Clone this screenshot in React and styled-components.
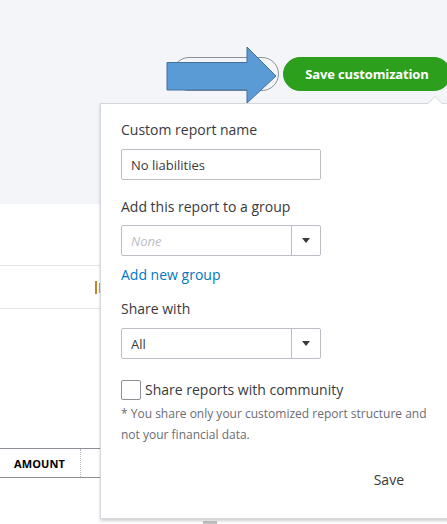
import React from "react";
import styled, { createGlobalStyle } from "styled-components";

const Global = createGlobalStyle`
  html, body { margin: 0; padding: 0; background: #fff; }
  body { font-family: "Open Sans", "Liberation Sans", sans-serif; color: #393a3d; }
  * { box-sizing: border-box; }
`;

const Page = styled.div`
  position: relative;
  width: 447px;
  height: 524px;
  overflow: hidden;
  background: #fff;
`;

const TopBand = styled.div`
  height: 204px;
  background: #f4f5f9;
  display: flex;
  justify-content: flex-end;
  align-items: flex-start;
  padding-top: 57px;
  margin-right: -4px;
`;

const ButtonRow = styled.div`
  display: flex;
  gap: 4px;
`;

const Pill = styled.button`
  height: 34px;
  border-radius: 17px;
  font-family: inherit;
  font-size: 13px;
  font-weight: 700;
  letter-spacing: -0.15px;
  white-space: nowrap;
  padding: 0;
  cursor: pointer;
  border: 1px solid ${(p) => (p.$primary ? "#2ca01c" : "#8d9096")};
  background: ${(p) => (p.$primary ? "#2ca01c" : "transparent")};
  color: ${(p) => (p.$primary ? "#fff" : "#393a3d")};
  width: ${(p) => p.$w}px;
`;

const Row = styled.div`
  height: ${(p) => p.$h}px;
  border-bottom: ${(p) => (p.$line ? "1px solid #e3e5ea" : "none")};
  display: flex;
  align-items: center;
  padding-left: ${(p) => p.$pl || 0}px;
`;

const BrownMark = styled.span`
  font-size: 14px;
  color: #3d6d9a;
  border-left: 2px solid #c7832a;
  padding-left: 1px;
  line-height: 13px;
`;

const TableHead = styled.div`
  margin-top: 139px;
  height: 30px;
  border-top: 1px solid #8d9096;
  border-bottom: 1px solid #8d9096;
  display: flex;
  align-items: center;
`;

const HeadCell = styled.div`
  width: 81px;
  height: 100%;
  display: flex;
  align-items: center;
  padding-left: 14px;
  font-size: 11px;
  font-weight: 700;
  color: #000;
  border-right: 1px dotted #b5b8bd;
  letter-spacing: 0.1px;
`;

const Nub = styled.div`
  position: absolute;
  left: 203px;
  top: 521px;
  width: 14px;
  height: 3px;
  background: #c4c4c4;
`;

const Arrow = styled.svg`
  position: absolute;
  left: 166px;
  top: 46px;
`;

const Popover = styled.div`
  position: absolute;
  left: 100px;
  top: 103px;
  width: 352px;
  height: 416px;
  background: #fff;
  border: 1px solid #d4d7dc;
  box-shadow: 0 2px 3px rgba(0, 0, 0, 0.18);
  padding: 16px 0 0 20px;
  display: flex;
  flex-direction: column;
  align-items: flex-start;
`;

const Caret = styled.div`
  position: absolute;
  top: -8px;
  left: 326px;
  width: 0;
  height: 0;
  border-left: 8px solid transparent;
  border-right: 8px solid transparent;
  border-bottom: 8px solid #d4d7dc;
  &::after {
    content: "";
    position: absolute;
    left: -7px;
    top: 1px;
    border-left: 7px solid transparent;
    border-right: 7px solid transparent;
    border-bottom: 7px solid #fff;
  }
`;

const Label = styled.div`
  font-size: 14px;
  line-height: 20px;
  color: #393a3d;
  margin-top: ${(p) => p.$mt || 0}px;
`;

const Field = styled.div`
  margin-top: ${(p) => p.$mt || 0}px;
  width: 200px;
  height: 31px;
  border: 1px solid #babec5;
  border-radius: 2px;
  display: flex;
  align-items: center;
  font-size: 13px;
  color: ${(p) => (p.$placeholder ? "#babec5" : "#393a3d")};
  font-style: ${(p) => (p.$placeholder ? "italic" : "normal")};
`;

const FieldText = styled.div`
  flex: 1;
  padding-left: 9px;
`;

const DropButton = styled.div`
  width: 29px;
  height: 100%;
  border-left: 1px solid #babec5;
  display: flex;
  align-items: center;
  justify-content: center;
  &::before {
    content: "";
    border-left: 4.5px solid transparent;
    border-right: 4.5px solid transparent;
    border-top: 5px solid #393a3d;
  }
`;

const Link = styled.a`
  margin-top: ${(p) => p.$mt || 0}px;
  font-size: 14px;
  line-height: 20px;
  color: #0077c5;
  text-decoration: none;
`;

const CheckRow = styled.label`
  margin-top: 21px;
  display: flex;
  align-items: center;
  gap: 4px;
  font-size: 14px;
  font-weight: 500;
  color: #393a3d;
  line-height: 20px;
`;

const Box = styled.span`
  width: 20px;
  height: 20px;
  border: 1px solid #8d9096;
  border-radius: 2px;
  background: #fff;
`;

const Note = styled.p`
  margin: 3px 0 0;
  width: 312px;
  font-size: 12px;
  line-height: 21px;
  color: #6b6c72;
`;

const Footer = styled.div`
  margin-top: 25px;
  width: 283px;
  display: flex;
  justify-content: flex-end;
`;

const SaveLink = styled.span`
  font-size: 14px;
  line-height: 20px;
  font-weight: 500;
  color: #393a3d;
`;

export default function App() {
  return (
    <>
      <Global />
      <Page>
        <TopBand>
          <ButtonRow>
            <Pill $w={107} />
            <Pill $primary $w={168}>Save customization</Pill>
          </ButtonRow>
        </TopBand>
        <Row $h={62} $line />
        <Row $h={43} $line $pl={95}>
          <BrownMark>E</BrownMark>
        </Row>
        <TableHead>
          <HeadCell>AMOUNT</HeadCell>
        </TableHead>
        <Nub />

        <Popover>
          <Caret />
          <Label>Custom report name</Label>
          <Field $mt={9}>
            <FieldText>No liabilities</FieldText>
          </Field>
          <Label $mt={17}>Add this report to a group</Label>
          <Field $mt={8} $placeholder>
            <FieldText>None</FieldText>
            <DropButton />
          </Field>
          <Link $mt={9} href="#">Add new group</Link>
          <Label $mt={14}>Share with</Label>
          <Field $mt={9}>
            <FieldText>All</FieldText>
            <DropButton />
          </Field>
          <CheckRow>
            <Box />
            Share reports with community
          </CheckRow>
          <Note>* You share only your customized report structure and not your financial data.</Note>
          <Footer>
            <SaveLink>Save</SaveLink>
          </Footer>
        </Popover>

        <Arrow width="114" height="60" viewBox="0 0 114 60">
          <polygon
            points="1,16.5 81,16.5 81,1 110,30 81,57 81,44 1,44"
            fill="#5b9bd5"
            stroke="#41719c"
            strokeWidth="1"
          />
        </Arrow>
      </Page>
    </>
  );
}
